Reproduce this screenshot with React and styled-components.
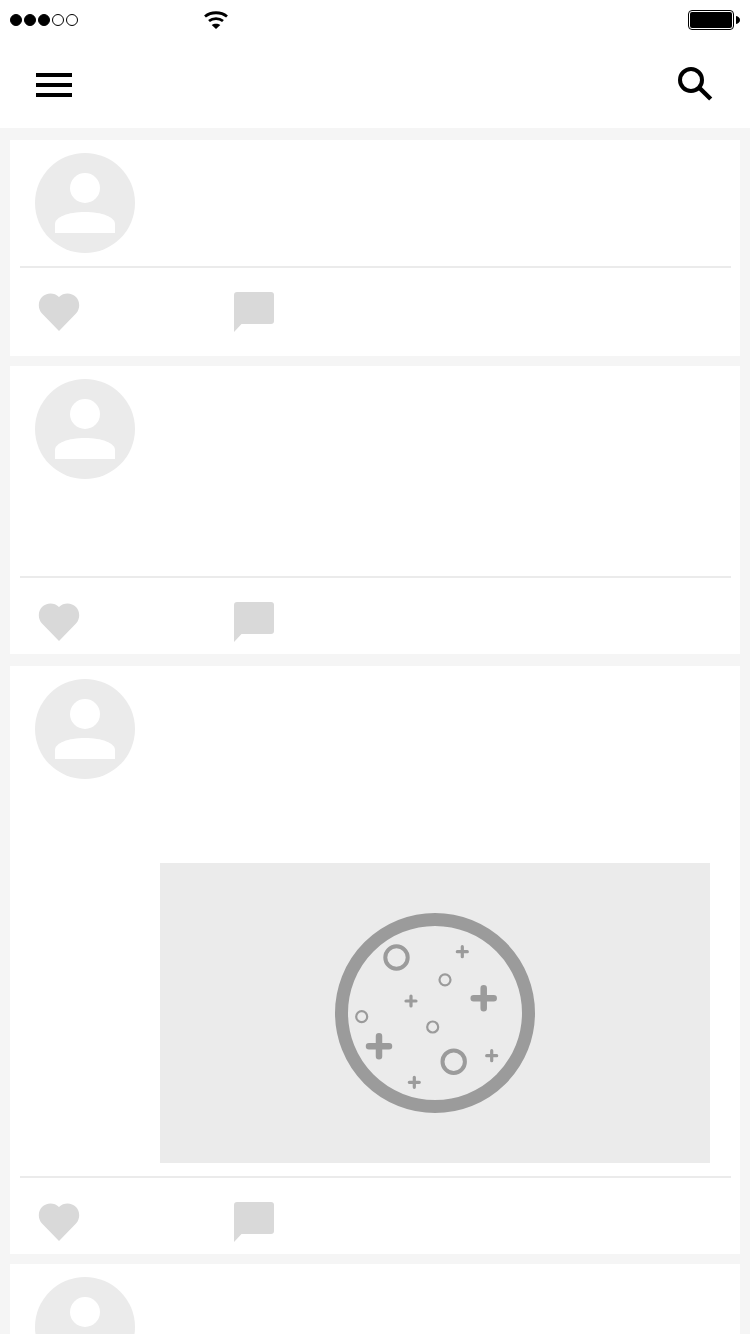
import React from "react";
import styled, { createGlobalStyle } from "styled-components";

const Global = createGlobalStyle`
  html, body { margin: 0; padding: 0; background: #f5f5f5; height: 1334px; overflow: hidden; font-family: "Liberation Sans", sans-serif; }
`;
const Page = styled.div`width: 750px; height: 1334px; overflow: hidden; background: #f5f5f5;`;
const Header = styled.header`background: #fff; height: 128px; display: flex; flex-direction: column;`;
const StatusBar = styled.div`height: 40px; display: flex; align-items: center; padding: 0 10px;`;
const Dots = styled.div`display: flex; gap: 2px;`;
const Dot = styled.span`
  width: 12px; height: 12px; box-sizing: border-box; border-radius: 50%;
  border: 1.5px solid #000; background: ${p => (p.$on ? "#000" : "#fff")};
`;
const WifiIcon = styled.svg`width: 26px; height: 20px; margin-left: 125px; display: block;`;
const Battery = styled.div`margin-left: auto; display: flex; align-items: center; gap: 2px;`;
const BatteryBody = styled.div`
  width: 46px; height: 20px; box-sizing: border-box; border: 1px solid #000; border-radius: 4px; padding: 1px; background: #fff;
`;
const BatteryFill = styled.div`width: 100%; height: 100%; background: #000; border-radius: 2px;`;
const BatteryNub = styled.svg`width: 4px; height: 8px; display: block;`;
const NavBar = styled.nav`height: 88px; display: flex; align-items: center; justify-content: space-between; padding: 0 37px 0 36px;`;
const Burger = styled.div`display: flex; flex-direction: column; gap: 6px; margin-top: 2px;`;
const BurgerLine = styled.span`display: block; width: 36px; height: 4px; background: #000;`;
const SearchIcon = styled.svg`width: 35px; height: 35px; display: block; margin-top: 1px;`;

const Feed = styled.main`display: flex; flex-direction: column; padding: 12px 10px 0;`;
const Card = styled.article`
  background: #fff; padding: 13px 10px 0; margin-top: ${p => p.$gap || 0}px; flex: none;
`;
const PostBody = styled.div`display: flex; min-height: ${p => p.$min}px; padding: 0 15px; box-sizing: border-box;`;
const Avatar = styled.svg`width: 100px; height: 100px; display: block; flex: none;`;
const Media = styled.div`
  margin: 184px 0 13px 25px; width: 550px; height: 300px; background: #ebebeb;
  display: flex; align-items: center; justify-content: center;
`;
const PlanetIcon = styled.svg`width: 200px; height: 200px; display: block;`;
const Divider = styled.hr`border: 0; height: 2px; margin: 0 -0.5px; background: #ebebeb;`;
const Actions = styled.div`height: ${p => p.$h}px; display: flex; align-items: flex-start; padding: 24px 0 0 18px; box-sizing: border-box;`;
const HeartIcon = styled.svg`width: 42px; height: 38px; display: block; margin-top: 1px;`;
const CommentIcon = styled.svg`width: 40px; height: 40px; display: block; margin-left: 154px;`;

const Person = () => (
  <Avatar viewBox="0 0 100 100">
    <circle cx="50" cy="50" r="50" fill="#ebebeb" />
    <circle cx="50" cy="35" r="15" fill="#fff" />
    <path d="M20 80v-9C20 64 33 59 50 59s30 5 30 12v9z" fill="#fff" />
  </Avatar>
);
const Post = ({ min, actions, gap, children }) => (
  <Card $gap={gap}>
    <PostBody $min={min}>
      <Person />
      {children}
    </PostBody>
    <Divider />
    <Actions $h={actions}>
      <HeartIcon viewBox="0 0 42 38">
        <path d="M21 38 4 20.500C-.5 15.500 0 8 4 4 8.500-.5 16-1 21 4c5-5 12.500-4.500 17 0 4 4 4.500 11.500 0 16.500z" fill="#d9d9d9" />
      </HeartIcon>
      <CommentIcon viewBox="0 0 40 40">
        <path d="M3 0h34a3 3 0 0 1 3 3v26a3 3 0 0 1-3 3H7.500L0 40V3a3 3 0 0 1 3-3z" fill="#d9d9d9" />
      </CommentIcon>
    </Actions>
  </Card>
);

const rings = [[61.5, 44.5, 11.2, 4], [110, 66.8, 5.5, 2.2], [26.7, 103.7, 5.5, 2.2], [97.7, 114, 5.5, 2.2], [118.7, 148.7, 11.2, 4]];
const plus = [[148.7, 85.3, 10, 6.5], [44, 133.3, 10, 6.5], [127.3, 38.7, 5, 3.2], [76, 88, 5, 3.2], [156.7, 142.7, 5, 3.2], [79.3, 169.3, 5, 3.2]];

export default function App() {
  return (
    <Page>
      <Global />
      <Header>
        <StatusBar>
          <Dots>
            {[1, 1, 1, 0, 0].map((on, i) => <Dot key={i} $on={!!on} />)}
          </Dots>
          <WifiIcon viewBox="0 0 26 20">
            <path d="M2 6.500C8 1.500 18 1.500 24 6.500" fill="none" stroke="#000" strokeWidth="2.800" />
            <path d="M6 11c4-3.300 10-3.300 14 0" fill="none" stroke="#000" strokeWidth="2.800" />
            <path d="M8.700 15C11 13.300 15 13.300 17.300 15L13 19z" fill="#000" />
          </WifiIcon>
          <Battery>
            <BatteryBody><BatteryFill /></BatteryBody>
            <BatteryNub viewBox="0 0 4 8"><path d="M0 0C2.500 .5 4 2 4 4S2.500 7.500 0 8z" fill="#000" /></BatteryNub>
          </Battery>
        </StatusBar>
        <NavBar>
          <Burger><BurgerLine /><BurgerLine /><BurgerLine /></Burger>
          <SearchIcon viewBox="0 0 35 35">
            <circle cx="13" cy="13" r="11" fill="none" stroke="#000" strokeWidth="4" />
            <path d="M21.500 21 32.700 32" fill="none" stroke="#000" strokeWidth="4.500" />
          </SearchIcon>
        </NavBar>
      </Header>
      <Feed>
        <Post min={113} actions={88} />
        <Post min={197} actions={76} gap={10} />
        <Post min={497} actions={76} gap={12}>
          <Media>
            <PlanetIcon viewBox="0 0 200 200">
              <circle cx="100" cy="100" r="93.500" fill="none" stroke="#9b9b9b" strokeWidth="13" />
              {rings.map(([x, y, r, w], i) => (
                <circle key={i} cx={x} cy={y} r={r} fill="none" stroke="#9b9b9b" strokeWidth={w} />
              ))}
              {plus.map(([x, y, l, w], i) => (
                <path key={i} d={`M${x - l} ${y}H${x + l}M${x} ${y - l}V${y + l}`} fill="none" stroke="#9b9b9b" strokeWidth={w} strokeLinecap="round" />
              ))}
            </PlanetIcon>
          </Media>
        </Post>
        <Post min={113} actions={88} gap={10} />
      </Feed>
    </Page>
  );
}
